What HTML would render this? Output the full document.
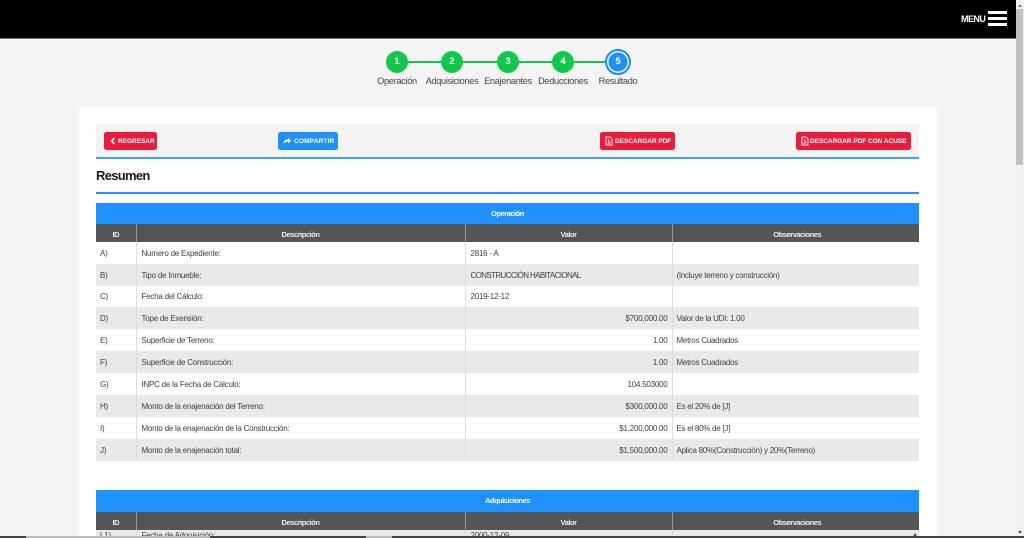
<!DOCTYPE html>
<html lang="es"><head><meta charset="utf-8"><title>Resumen</title>
<style>
*{box-sizing:border-box}
html,body{margin:0;padding:0;width:1024px;height:538px;overflow:hidden;background:#f4f4f4;font-family:"Liberation Sans",sans-serif;color:#444}
#wrap{position:relative;width:1024px;height:538px;overflow:hidden;background:#f4f4f4}
.a{position:absolute}
#top{left:0;top:0;width:1016px;height:39px;background:#000;border-bottom:1px solid #777}
#menu{left:961px;top:14px;color:#fff;font-size:9px;font-weight:bold;letter-spacing:-.55px;line-height:11px}
.bar{left:988px;width:19px;height:3px;background:#fff}
.c{width:22px;height:22px;border-radius:50%;background:#12c84a;color:#fff;font-size:9.5px;font-weight:bold;text-align:center;line-height:22px;top:51px}
.lbl{top:75px;width:80px;text-align:center;font-size:9.2px;letter-spacing:-.3px;line-height:12px;color:#444}
#card{left:79px;top:107px;width:858px;height:431px;background:#fff}
#tool{left:96px;top:124px;width:823px;height:35px;background:#f3f3f3;border-bottom:2px solid #3fa2ff}
.btn{top:132px;height:17.5px;border-radius:2.5px;color:#fff;font-size:6.6px;font-weight:bold;line-height:19px;letter-spacing:-.1px;white-space:nowrap}
.red{background:#ea1c3c}.blue{background:#1e90ff}
.btn svg{position:absolute;left:4px;top:3.5px}
.btn span{position:absolute;top:0}
h2{margin:0;left:96px;top:168px;font-size:13px;letter-spacing:-.7px;line-height:16px;color:#1a1a1a;font-weight:bold}
#rule{left:96px;top:192px;width:823px;height:2px;background:#1e90ff}
table{position:absolute;left:96px;width:823px;border-collapse:collapse;table-layout:fixed;font-size:8px;letter-spacing:-.23px}
col.i{width:40px}col.d{width:329px}col.v{width:207px}col.o{width:247px}
th.t{background:#1e90ff;color:#fff;height:21px;padding:0 0 1px;font-size:7.4px;letter-spacing:-.42px;font-weight:bold;text-align:center}
th.h{background:#555;color:#eee;height:18px;padding:2px 0 0;font-size:7.5px;letter-spacing:-.45px;font-weight:bold;text-align:center;border-left:1px solid #999}
th.h:first-child{border-left:0}
th.ob{padding-left:3px}
td{height:22px;padding:0 0 0 5px;border-left:1px solid #ddd;color:#404040;white-space:nowrap;overflow:hidden}
td.r{text-align:right;padding:0 4px 0 0}
td.o{padding-left:4px;letter-spacing:-.27px}
td.cap{letter-spacing:-.62px}
td:first-child{border-left:0;padding-left:4px}
tr.g td{background:#e9e9e9}
tr.s td{height:21px}
tr.k td{height:12px;line-height:10px}
#sb{left:1016px;top:0;width:8px;height:538px;background:#f1f1f1}
#th{left:1016px;top:9px;width:7px;height:156px;background:#c1c1c1}
</style></head><body>
<div id="wrap">
<div class="a" id="top"></div>
<div class="a" id="menu">MENU</div>
<div class="a bar" style="top:11px"></div><div class="a bar" style="top:17px"></div><div class="a bar" style="top:23px"></div>

<div class="a" style="left:397px;top:61px;width:222px;height:2px;background:#12c84a"></div>
<div class="a c" style="left:386px">1</div>
<div class="a c" style="left:441px">2</div>
<div class="a c" style="left:497px">3</div>
<div class="a c" style="left:552px">4</div>
<div class="a c" style="left:605px;top:49px;width:26px;height:26px;line-height:22px;background:#1e90ff;border:2px solid #1e90ff;box-shadow:inset 0 0 0 1.5px #fff">5</div>
<div class="a lbl" style="left:357px">Operación</div>
<div class="a lbl" style="left:412px">Adquisiciones</div>
<div class="a lbl" style="left:468px">Enajenantes</div>
<div class="a lbl" style="left:523px">Deducciones</div>
<div class="a lbl" style="left:578px">Resultado</div>

<div class="a" id="card"></div>
<div class="a" id="tool"></div>

<div class="a btn red" style="left:104px;width:53px"><svg width="10" height="10" viewBox="0 0 10 10"><path d="M6.500 2 3.500 5l3 3" fill="none" stroke="#fff" stroke-width="1.6"/></svg><span style="left:14px">REGRESAR</span></div>
<div class="a btn blue" style="left:278px;width:60px"><svg width="10" height="10" viewBox="0 0 10 10"><path d="M6 1.800 9.200 4.600 6 7.200V5.600C4 5.600 2.600 6.200 1.200 8 1.600 5.200 3.200 3.600 6 3.400Z" fill="#fff"/></svg><span style="left:16px;letter-spacing:.1px">COMPARTIR</span></div>
<div class="a btn red" style="left:600px;width:75px"><svg width="10" height="10" viewBox="0 0 10 10"><path d="M2 1h4l2 2v6H2ZM3.500 7.500 6.500 6.400M4.500 3.500l.8 3" fill="none" stroke="#fff" stroke-width=".9"/></svg><span style="left:15px">DESCARGAR PDF</span></div>
<div class="a btn red" style="left:796px;width:115px"><svg width="10" height="10" viewBox="0 0 10 10"><path d="M2 1h4l2 2v6H2ZM3.500 7.500 6.500 6.400M4.500 3.500l.8 3" fill="none" stroke="#fff" stroke-width=".9"/></svg><span style="left:14px">DESCARGAR PDF CON ACUSE</span></div>

<h2 class="a">Resumen</h2>
<div class="a" id="rule"></div>

<table style="top:203px">
<colgroup><col class="i"><col class="d"><col class="v"><col class="o"></colgroup>
<tr><th class="t" colspan="4">Operación</th></tr>
<tr><th class="h">ID</th><th class="h">Descripción</th><th class="h">Valor</th><th class="h ob">Observaciones</th></tr>
<tr><td>A)</td><td>Numero de Expediente:</td><td>2816 - A</td><td class="o"></td></tr>
<tr class="g"><td>B)</td><td>Tipo de Inmueble:</td><td class="cap">CONSTRUCCIÓN HABITACIONAL</td><td class="o">(Incluye terreno y construcción)</td></tr>
<tr class="s"><td>C)</td><td>Fecha del Cálculo:</td><td>2019-12-12</td><td class="o"></td></tr>
<tr class="g"><td>D)</td><td>Tope de Exensión:</td><td class="r">$700,000.00</td><td class="o">Valor de la UDI: 1.00</td></tr>
<tr><td>E)</td><td>Superficie de Terreno:</td><td class="r">1.00</td><td class="o">Metros Cuadrados</td></tr>
<tr class="g"><td>F)</td><td>Superficie de Construcción:</td><td class="r">1.00</td><td class="o">Metros Cuadrados</td></tr>
<tr><td>G)</td><td>INPC de la Fecha de Cálculo:</td><td class="r">104.503000</td><td class="o"></td></tr>
<tr class="g"><td>H)</td><td>Monto de la enajenación del Terreno:</td><td class="r">$300,000.00</td><td class="o">Es el 20% de [J]</td></tr>
<tr><td>I)</td><td>Monto de la enajenación de la Construcción:</td><td class="r">$1,200,000.00</td><td class="o">Es el 80% de [J]</td></tr>
<tr class="g"><td>J)</td><td>Monto de la enajenación total:</td><td class="r">$1,500,000.00</td><td class="o">Aplica 80%(Construcción) y 20%(Terreno)</td></tr>
</table>

<table style="top:490px">
<colgroup><col class="i"><col class="d"><col class="v"><col class="o"></colgroup>
<tr><th class="t" colspan="4" style="height:22px">Adquisiciones</th></tr>
<tr><th class="h">ID</th><th class="h">Descripción</th><th class="h">Valor</th><th class="h ob">Observaciones</th></tr>
<tr class="g k"><td>L1)</td><td>Fecha de Adquisición:</td><td>2000-12-09</td><td class="o"></td></tr>
</table>

<div class="a" id="sb"></div>
<div class="a" id="th"></div>
<div class="a" style="left:1018px;top:4px;width:0;height:0;border-left:2.5px solid transparent;border-right:2.5px solid transparent;border-bottom:3px solid #777"></div>
<div class="a" style="left:1018px;top:531px;width:0;height:0;border-left:2.5px solid transparent;border-right:2.5px solid transparent;border-top:3px solid #555"></div>
<div class="a" style="left:913px;top:533px;width:0;height:0;border-left:2.5px solid transparent;border-right:2.5px solid transparent;border-bottom:3px solid #555"></div>
<div class="a" style="left:0;top:536px;width:1024px;height:2px;background:#444"></div>
<div class="a" style="left:26px;top:536px;width:184px;height:2px;background:#bbb"></div>
<div class="a" style="left:366px;top:536px;width:26px;height:2px;background:#bbb"></div>
</div>
</body></html>
